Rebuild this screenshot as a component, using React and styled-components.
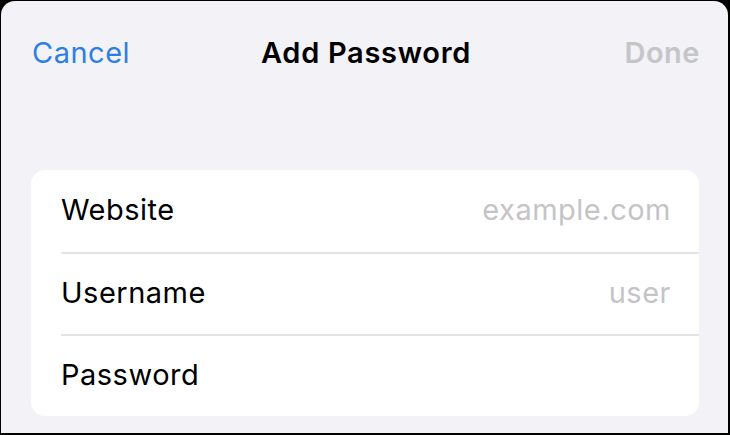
import React from "react"
import styled, { createGlobalStyle } from "styled-components"

const Global = createGlobalStyle`
    html, body {
        margin: 0;
        padding: 0;
        background: #000;
    }
    body {
        font-family: Inter, "Liberation Sans", sans-serif;
        -webkit-font-smoothing: antialiased;
    }
`

const Sheet = styled.div`
    margin: 1px 2px 0 1px;
    width: 727px;
    height: 432px;
    background: #f2f2f7;
    border-radius: 14px 14px 0 0;
    display: flex;
    flex-direction: column;
    overflow: hidden;
`

const NavBar = styled.div`
    display: grid;
    grid-template-columns: 1fr auto 1fr;
    align-items: center;
    height: 102px;
    padding: 0 28px 0 31px;
`

const NavButton = styled.span`
    font-size: 29px;
    font-weight: ${p => (p.$bold ? 600 : 400)};
    color: ${p => p.$color};
    justify-self: ${p => p.$align};
    letter-spacing: 0.5px;
`

const Title = styled.span`
    font-size: 29px;
    font-weight: 600;
    color: #000;
    letter-spacing: 0.7px;
`

const Card = styled.div`
    margin: 67px 29px 0 30px;
    background: #fff;
    border-radius: 14px;
    display: flex;
    flex-direction: column;
`

const Row = styled.div`
    display: flex;
    align-items: center;
    justify-content: space-between;
    height: 82px;
    padding: 0 28px 3px 30px;
    position: relative;
    box-sizing: border-box;
    border-top: ${p => (p.$first ? "none" : "2px solid transparent")};

    &::before {
        content: "";
        display: ${p => (p.$first ? "none" : "block")};
        position: absolute;
        top: -2px;
        left: 30px;
        right: 0;
        height: 2px;
        background: #e4e4e8;
    }
`

const Label = styled.span`
    font-size: 29px;
    color: #000;
    letter-spacing: 0.5px;
`

const Placeholder = styled.span`
    font-size: 29px;
    color: #c4c4c7;
    letter-spacing: 0.5px;
`

const fields = [
    { label: "Website", placeholder: "example.com" },
    { label: "Username", placeholder: "user" },
    { label: "Password", placeholder: "" },
]

export default function App() {
    return (
        <>
            <Global />
            <Sheet>
                <NavBar>
                    <NavButton $color="#2f7ee3" $align="start">Cancel</NavButton>
                    <Title>Add Password</Title>
                    <NavButton $color="#c5c5c8" $align="end" $bold>Done</NavButton>
                </NavBar>
                <Card>
                    {fields.map((f, i) => (
                        <Row key={f.label} $first={i === 0}>
                            <Label>{f.label}</Label>
                            <Placeholder>{f.placeholder}</Placeholder>
                        </Row>
                    ))}
                </Card>
            </Sheet>
        </>
    )
}
